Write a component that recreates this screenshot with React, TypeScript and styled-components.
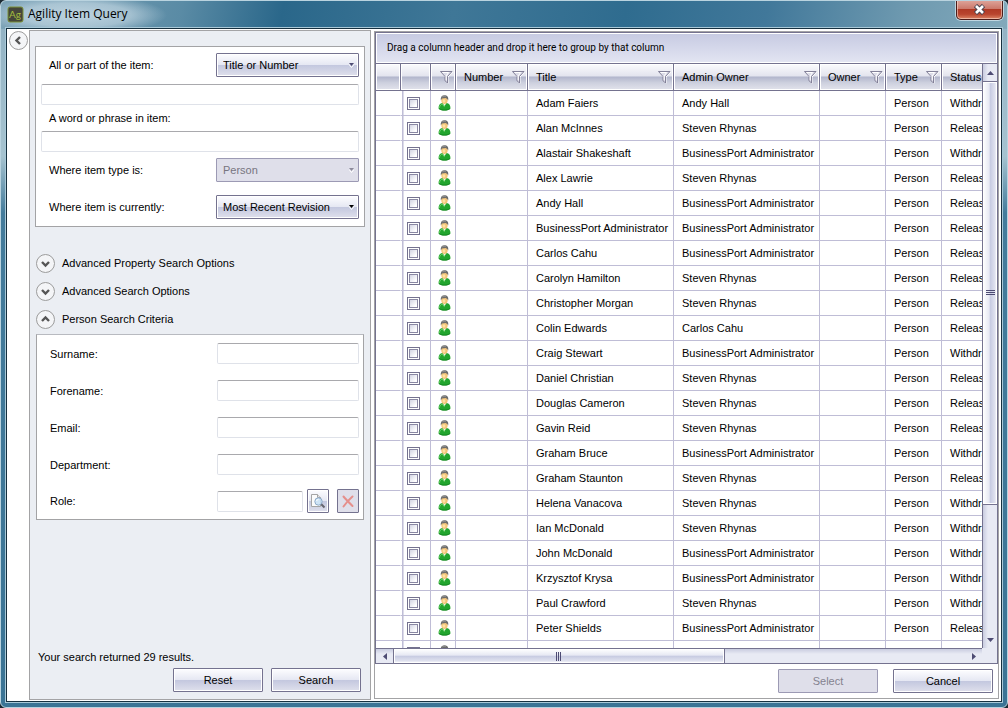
import React from "react";
import styled, { createGlobalStyle, css } from "styled-components";

const edge = "#74728f";
const rule = "#bfbdd6";

const GlobalStyle = createGlobalStyle`
  *, *::before, *::after { box-sizing: border-box; }
  html, body { margin: 0; background: #1d2a33; }
  body, button, input, select {
    font-family: "Liberation Sans", Arial, sans-serif;
    font-size: 11px;
    line-height: 14px;
    color: #000;
  }
`;

const gloss = css`
  background: linear-gradient(#fdfdff 0%, #e6e8f3 48%, #c4c8df 52%, #dfe0ec 100%);
  border: 1px solid ${edge};
  border-radius: 1px;
  box-shadow: inset 0 0 0 1px #fff;
`;

const Window = styled.div`
  display: flex;
  flex-direction: column;
  height: 100vh;
  min-height: 640px;
  padding: 0 4px 4px;
  border: 1px solid #b9d3df;
  border-radius: 6px;
  overflow: hidden;
  background:
    radial-gradient(ellipse 90px 20px at 76px 14px, rgba(214, 229, 238, 0.75), rgba(214, 229, 238, 0.55) 60%, transparent 100%) no-repeat 0 0 / 100% 28px,
    linear-gradient(100deg, #7ea4b8 0%, #5a8ba5 18%, #2a678a 28%, #3f7797 45%, #2f6c8f 62%, #41789a 76%, #6f9ab0 90%, #82a9bb 100%) no-repeat 0 0 / 100% 28px,
    linear-gradient(#8fb0c2 0%, #a6c3d0 22%, #447c9c 30%, #3b7495 100%);
`;

const TitleBar = styled.header`
  display: flex;
  align-items: center;
  flex: 0 0 26px;
  gap: 4px;
  padding-left: 2px;
  position: relative;
`;

const AppMark = styled.svg`
  width: 17px;
  height: 17px;
`;

const TitleText = styled.h1`
  margin: 0;
  font: 400 12px/18px "Open Sans", "Noto Sans", sans-serif;
`;

const CloseButton = styled.button`
  position: absolute;
  top: -1px;
  right: 0;
  display: grid;
  place-items: center;
  width: 47px;
  height: 20px;
  padding: 0;
  border: 1px solid #4b1c1a;
  border-top: 0;
  border-radius: 0 0 5px 5px;
  background: linear-gradient(#dfa79d 0%, #cc7a6c 45%, #b03a26 50%, #b9452f 75%, #dc8465 100%);
  box-shadow: inset 0 0 0 1px rgba(255, 225, 215, 0.55), 0 0 0 1px rgba(220, 235, 242, 0.7);
`;

const Client = styled.main`
  display: flex;
  flex: 1;
  min-height: 0;
  border: 1px solid #16303f;
  outline: 1px solid #a9c9d8;
  margin: 1px;
  background: #fff;
`;

const Rail = styled.div`
  flex: 0 0 22px;
  padding: 2px 0 0 2px;
`;

const RoundButton = styled.button`
  display: grid;
  place-items: center;
  flex: none;
  width: 19px;
  height: 19px;
  padding: 0;
  border: 1px solid #9c9c9c;
  border-radius: 50%;
  background: #f4f5f7;
`;

const SearchPane = styled.form`
  display: flex;
  flex-direction: column;
  flex: 0 0 342px;
  margin: 1px 3px 1px 0;
  padding: 15px 5px 7px;
  border: 1px solid #a3a3a5;
  background: #ebeef3;
`;

const QueryBox = styled.section`
  display: flex;
  flex-direction: column;
  padding: 6px 5px 7px;
  border: 1px solid #a3a3a5;
  background: #fff;
`;

const QueryRow = styled.div<{ $before?: number; $after?: number }>`
  display: flex;
  align-items: center;
  justify-content: space-between;
  margin-top: ${(p) => p.$before ?? 0}px;
  margin-bottom: ${(p) => p.$after ?? 0}px;
  padding-left: 8px;
`;

const WideLabel = styled.label`
  padding: 6px 8px;
`;

const TextBox = styled.input`
  flex: 1;
  min-width: 0;
  width: 100%;
  height: 21px;
  padding: 0 4px;
  border: 1px solid #dfe2e9;
  border-top-color: #a9a9ad;
  border-radius: 2px;
  background: #fff;
`;

const WideTextBox = styled(TextBox)`
  flex: none;
`;

const SelectFrame = styled.div`
  position: relative;
  width: 143px;
`;

const SelectBox = styled.select`
  appearance: none;
  display: block;
  width: 100%;
  height: 24px;
  padding: 0 16px 0 6px;
  ${gloss}
  &:disabled {
    background: #dfdfea;
    border-color: #9c9ab4;
    box-shadow: none;
    color: #77757f;
    opacity: 1;
  }
`;

const SelectArrow = styled.svg`
  position: absolute;
  right: 5px;
  top: 10px;
  width: 5px;
  height: 5px;
  pointer-events: none;
`;

const Expanders = styled.div`
  display: flex;
  flex-direction: column;
  margin: 22px 0 1px 1px;
`;

const Expander = styled.label`
  display: flex;
  align-items: center;
  gap: 7px;
  height: 28px;
`;

const CriteriaBox = styled.section`
  margin: 0 1px;
  padding: 0 4px 0 13px;
  border: 1px solid #a3a3a5;
  border-top-color: #b8bac0;
  background: #fff;
`;

const Field = styled.div`
  display: grid;
  grid-template-columns: 1fr 142px;
  align-items: center;
  height: 37px;
  &:last-child { height: 36px; }
`;

const FieldControls = styled.div`
  display: flex;
  align-items: center;
  gap: 8px;
`;

const Picker = styled.div`
  display: flex;
  align-items: center;
  flex: 1;
  gap: 4px;
`;

const IconButton = styled.button`
  display: grid;
  place-items: center;
  flex: none;
  width: 22px;
  height: 24px;
  padding: 0;
  ${gloss}
  &:disabled {
    background: #dfdfea;
    box-shadow: none;
  }
`;

const SearchFooter = styled.footer`
  display: flex;
  flex-direction: column;
  gap: 4px;
  margin-top: auto;
  padding: 0 4px 0 3px;
`;

const ResultNote = styled.p`
  margin: 0;
`;

const Actions = styled.div<{ $gap: number }>`
  display: flex;
  justify-content: flex-end;
  gap: ${(p) => p.$gap}px;
`;

const Button = styled.button<{ $wide?: boolean }>`
  width: ${(p) => (p.$wide ? 100 : 90)}px;
  height: 24px;
  padding: 0;
  ${gloss}
  &:disabled {
    background: #dfdfea;
    border-color: #9c9ab4;
    box-shadow: none;
    color: #84828f;
  }
`;

const ResultPane = styled.section`
  display: flex;
  flex-direction: column;
  flex: 1;
  min-width: 0;
  margin: 2px 2px 2px 0;
  border: 1px solid #a3a3a5;
`;

const ResultFooter = styled.footer`
  padding: 5px;
`;

const DataGrid = styled.div`
  display: flex;
  flex-direction: column;
  flex: 1;
  min-height: 0;
  border: 1px solid ${edge};
`;

const GroupBand = styled.div`
  display: flex;
  align-items: center;
  flex: 0 0 31px;
  padding: 0 11px;
  border-bottom: 1px solid ${edge};
  background: linear-gradient(#c6cae2, #e3e5f2);
  box-shadow: inset 0 0 0 1px #fff;
  font-family: Roboto, "Liberation Sans", sans-serif;
  font-size: 10px;
`;

const GridBody = styled.div`
  display: grid;
  grid-template-columns: minmax(0, 1fr) 15px;
  grid-template-rows: minmax(0, 1fr) 15px;
  flex: 1;
  min-height: 0;
`;

const Viewport = styled.div`
  overflow: hidden;
`;

const Table = styled.table`
  width: 100%;
  min-width: 660px;
  table-layout: fixed;
  border-collapse: separate;
  border-spacing: 0;
`;

const Col = styled.col<{ $w?: number }>`
  width: ${(p) => (p.$w ? `${p.$w}px` : "auto")};
`;

const HeadCell = styled.th`
  height: 27px;
  padding: 0 2px 0 8px;
  border-right: 1px solid ${edge};
  border-bottom: 1px solid ${edge};
  background: linear-gradient(#fbfbfd 0%, #e3e4ee 46%, #b2b6cc 50%, #cdd0de 72%, #e2e3ec 100%);
  box-shadow: inset 0 0 0 1px #fff;
  font-weight: 400;
  text-align: left;
  white-space: nowrap;
`;

const HeadContent = styled.div`
  display: flex;
  align-items: center;
  justify-content: space-between;
`;

const Cell = styled.td<{ $kind?: "lead" | "check" | "icon" }>`
  height: 25px;
  padding: 0 0 0 8px;
  border-right: 1px solid ${rule};
  border-bottom: 1px solid ${rule};
  white-space: nowrap;
  ${(p) => p.$kind === "lead" && css`border-right-color: transparent;`}
  ${(p) => p.$kind === "check" && css`
    padding-left: 6px;
    background: linear-gradient(90deg, #fff 1px, ${rule} 1px 2px, #dcdbe9 2px 3px, #fff 3px);
  `}
  ${(p) => p.$kind === "icon" && css`padding-left: 7px;`}
`;

const Tick = styled.input`
  appearance: none;
  display: block;
  width: 13px;
  height: 13px;
  margin: 0;
  border: 1px solid ${edge};
  background: linear-gradient(135deg, #d3d5e3, #fff 80%) center / 7px 7px no-repeat #fff;
  box-shadow: inset 0 0 0 1px #fff, inset 0 0 0 2px #8a88a3;
`;

const Glyph = styled.svg`
  display: block;
  flex: none;
`;

const ScrollBar = styled.div<{ $vertical?: boolean }>`
  display: flex;
  min-width: 0;
  min-height: 0;
  ${(p) => p.$vertical
    ? css`
        flex-direction: column;
        border-left: 1px solid ${edge};
        background: linear-gradient(90deg, #c9cce0, #e8eaf4 5px);
      `
    : css`
        border-top: 1px solid ${edge};
        background: linear-gradient(#c9cce0, #e8eaf4 5px);
      `}
`;

const ScrollArrow = styled.button`
  display: grid;
  place-items: center;
  flex: 0 0 17px;
  min-width: 0;
  padding: 0;
  border: 0;
  background: none;
`;

const ScrollTrack = styled.div<{ $vertical?: boolean }>`
  display: flex;
  flex: 1;
  flex-direction: ${(p) => (p.$vertical ? "column" : "row")};
  min-width: 0;
  min-height: 0;
`;

const ScrollThumb = styled.div<{ $vertical?: boolean; $share: number }>`
  display: grid;
  place-items: center;
  flex: 0 0 ${(p) => p.$share}%;
  border: 1px solid ${edge};
  ${(p) => p.$vertical
    ? css`border-width: 1px 0; background: linear-gradient(90deg, #fff, #e6e8f3 45%, #c6cae1 50%, #e0e2ef 85%, #fff);`
    : css`border-width: 0 1px; background: linear-gradient(#fff, #e6e8f3 45%, #c6cae1 50%, #e0e2ef 85%, #fff);`}
  box-shadow: inset 0 0 0 1px #fff;
`;

const Corner = styled.div`
  background: #e8eaf4;
`;

const Chevron = ({ to }: { to: "up" | "down" | "left" }) => {
  const d = { up: "M1.5 6.5 5 3l3.500 3.500", down: "M1.5 3.500l3.500 3.500 3.500-3.500", left: "M6.500 1.500 3 5l3.500 3.500" }[to];
  return (
    <Glyph width="11" height="11" viewBox="-0.500 -0.500 11 11" aria-hidden="true">
      <path d={d} fill="none" stroke="#555" strokeWidth="2.400" />
    </Glyph>
  );
};

const Funnel = () => (
  <Glyph width="13" height="13" viewBox="0 0 13 13" aria-hidden="true">
    <path d="M1 1h11.5L8 6v6.5L5.500 10.300V6z" fill="#e6e6ef" stroke="#fff" />
    <path d="M.5.5H12L7.500 5.500V12L5 9.800V5.500z" fill="#dcdce8" stroke="#77758f" strokeWidth=".9" />
    <path d="M2.500 1.500h6L6.200 5.200v4" fill="none" stroke="#fff" />
  </Glyph>
);

const Person = () => (
  <Glyph width="13" height="16" viewBox="0 0 13 16" aria-hidden="true">
    <path d="M.5 13.500C.5 10 2 8.400 4.300 8h4.400c2.300.4 3.800 2 3.800 5.500-1.200 1.400-3.400 2-6 2s-4.800-.6-6-2z" fill="#22a52e" />
    <path d="M1.500 12.800C1.700 10.600 2.700 9.500 4.300 9.200l2.200 2.600" fill="none" stroke="#6bd466" />
    <path d="M1.200 13.700c1.300 1 3.200 1.400 5.300 1.400s4-.4 5.300-1.400" fill="none" stroke="#0f7d1d" strokeWidth=".8" />
    <path d="M4.500 8.100 6.500 11l2-2.900z" fill="#f4f7e8" />
    <ellipse cx="6.500" cy="5" rx="3.200" ry="3.900" fill="#f3c478" />
    <ellipse cx="6" cy="6" rx="1.500" ry="1.700" fill="#fde3a6" />
    <path d="M2.800 5.500C2.300 2 3.800.3 6.500.3s4.300 1.600 3.700 5.200L9.300 4 7.600 2.900 4 3.600z" fill="#6c6c6c" />
    <path d="M4.200 2C5 1.200 6.500 1 7.800 1.400" fill="none" stroke="#a2a2a2" strokeWidth=".8" />
  </Glyph>
);

const Triangle = ({ to }: { to: "up" | "down" | "left" | "right" }) => {
  const points = {
    up: "0,6 3.5,2 7,6",
    down: "0,2 3.5,6 7,2",
    left: "6,0 2,3.5 6,7",
    right: "2,0 6,3.5 2,7",
  }[to];
  return (
    <Glyph width="7" height="7" viewBox="0 0 7 7" aria-hidden="true">
      <polygon points={points} fill="#4d4b73" />
    </Glyph>
  );
};

const Grip = ({ vertical }: { vertical?: boolean }) => (
  <Glyph width="9" height="9" viewBox="0 0 9 9" shapeRendering="crispEdges" aria-hidden="true">
    <path
      d={vertical ? "M0 2.500h9M0 4.500h9M0 6.500h9" : "M2.500 0v9M4.500 0v9M6.500 0v9"}
      stroke="#4d4b73"
    />
  </Glyph>
);

type DropdownProps = { id: string; value: string; disabled?: boolean; arrow?: string };

const Dropdown = ({ id, value, disabled, arrow = "#000" }: DropdownProps) => (
  <SelectFrame>
    <SelectBox id={id} disabled={disabled}>
      <option>{value}</option>
    </SelectBox>
    <SelectArrow viewBox="0 0 5 5" aria-hidden="true">
      <path d="M0 1.500 2.500 4.500 5 1.500" fill="none" stroke="#fff" />
      <polygon points="0,0 5,0 2.500,3" fill={arrow} />
    </SelectArrow>
  </SelectFrame>
);

const BPA = "BusinessPort Administrator";
const SR = "Steven Rhynas";
const people: [string, string, string][] = [
  ["Adam Faiers", "Andy Hall", "Withdrawn"],
  ["Alan McInnes", SR, "Released"],
  ["Alastair Shakeshaft", BPA, "Withdrawn"],
  ["Alex Lawrie", SR, "Released"],
  ["Andy Hall", BPA, "Released"],
  [BPA, BPA, "Released"],
  ["Carlos Cahu", BPA, "Released"],
  ["Carolyn Hamilton", SR, "Released"],
  ["Christopher Morgan", SR, "Released"],
  ["Colin Edwards", "Carlos Cahu", "Released"],
  ["Craig Stewart", BPA, "Withdrawn"],
  ["Daniel Christian", SR, "Released"],
  ["Douglas Cameron", SR, "Released"],
  ["Gavin Reid", SR, "Released"],
  ["Graham Bruce", BPA, "Withdrawn"],
  ["Graham Staunton", SR, "Released"],
  ["Helena Vanacova", SR, "Withdrawn"],
  ["Ian McDonald", SR, "Withdrawn"],
  ["John McDonald", BPA, "Withdrawn"],
  ["Krzysztof Krysa", BPA, "Withdrawn"],
  ["Paul Crawford", SR, "Withdrawn"],
  ["Peter Shields", BPA, "Released"],
  ["", "", ""],
];

const columns = ["Number", "Title", "Admin Owner", "Owner", "Type", "Status"];
const widths = [25, 30, 25, 72, 146, 146, 66, 56];

export default function App() {
  return (
    <>
      <GlobalStyle />
      <Window>
        <TitleBar>
          <AppMark viewBox="0 0 17 17" aria-hidden="true">
            <rect x="1" y="1" width="15" height="15" rx="2" fill="#45463a" stroke="#7c9136" />
            <text x="2" y="12" fontSize="10" fontFamily="Lato, sans-serif" fill="#a3bd3d">Ag</text>
          </AppMark>
          <TitleText>Agility Item Query</TitleText>
          <CloseButton type="button" aria-label="Close">
            <Glyph width="13" height="11" viewBox="0 0 13 11" aria-hidden="true">
              <path d="M2.500 1.500l8 8M10.500 1.500l-8 8" stroke="#4a4450" strokeWidth="4.600" />
              <path d="M3 2l7 7M10 2 3 9" stroke="#fff" strokeWidth="2.600" />
            </Glyph>
          </CloseButton>
        </TitleBar>
        <Client>
          <Rail>
            <RoundButton type="button" aria-label="Collapse search"><Chevron to="left" /></RoundButton>
          </Rail>
          <SearchPane onSubmit={(e) => e.preventDefault()}>
            <QueryBox>
              <QueryRow $after={7}>
                <label htmlFor="match">All or part of the item:</label>
                <Dropdown id="match" value="Title or Number" arrow="#4d4b73" />
              </QueryRow>
              <WideTextBox id="part" aria-label="Item text" />
              <WideLabel htmlFor="phrase">A word or phrase in item:</WideLabel>
              <WideTextBox id="phrase" />
              <QueryRow $before={6} $after={13}>
                <label htmlFor="type">Where item type is:</label>
                <Dropdown id="type" value="Person" disabled arrow="#8d8b9c" />
              </QueryRow>
              <QueryRow>
                <label htmlFor="revision">Where item is currently:</label>
                <Dropdown id="revision" value="Most Recent Revision" />
              </QueryRow>
            </QueryBox>
            <Expanders>
              <Expander>
                <RoundButton type="button"><Chevron to="down" /></RoundButton>
                Advanced Property Search Options
              </Expander>
              <Expander>
                <RoundButton type="button"><Chevron to="down" /></RoundButton>
                Advanced Search Options
              </Expander>
              <Expander>
                <RoundButton type="button"><Chevron to="up" /></RoundButton>
                Person Search Criteria
              </Expander>
            </Expanders>
            <CriteriaBox>
              {["Surname", "Forename", "Email", "Department"].map((name) => (
                <Field key={name}>
                  <label htmlFor={name}>{name}:</label>
                  <TextBox id={name} />
                </Field>
              ))}
              <Field>
                <label htmlFor="Role">Role:</label>
                <FieldControls>
                  <Picker>
                    <TextBox id="Role" />
                    <IconButton type="button" aria-label="Find role">
                      <Glyph width="16" height="16" viewBox="0 0 16 16" aria-hidden="true">
                        <path d="M1.500 1.500h6l3 3v9h-9z" fill="#fbfbfb" stroke="#a5a5a5" />
                        <path d="M7.500 1.500v3h3" fill="#e4e4e4" stroke="#a5a5a5" />
                        <circle cx="8.500" cy="8.500" r="3.700" fill="#c5dff5" fillOpacity=".85" stroke="#8fabc9" />
                        <path d="M6.500 8c.3-1 1-1.500 2-1.600" fill="none" stroke="#fff" />
                        <path d="M11.300 11.300 14.500 14.500" stroke="#66666f" strokeWidth="2" />
                      </Glyph>
                    </IconButton>
                  </Picker>
                  <IconButton type="button" aria-label="Clear role" disabled>
                    <Glyph width="12" height="13" viewBox="0 0 12 13" aria-hidden="true">
                      <path d="M1.500 1.500C4 4.500 7.500 8 10.500 11M10.500 1.500C7 4.500 4 8 1.500 11.500" fill="none" stroke="#e58f8b" strokeWidth="2" strokeLinecap="round" />
                    </Glyph>
                  </IconButton>
                </FieldControls>
              </Field>
            </CriteriaBox>
            <SearchFooter>
              <ResultNote>Your search returned 29 results.</ResultNote>
              <Actions $gap={8}>
                <Button type="reset">Reset</Button>
                <Button type="submit">Search</Button>
              </Actions>
            </SearchFooter>
          </SearchPane>
          <ResultPane>
            <DataGrid>
              <GroupBand>Drag a column header and drop it here to group by that column</GroupBand>
              <GridBody>
                <Viewport>
                  <Table>
                    <colgroup>
                      {widths.map((w, i) => <Col key={i} $w={w} />)}
                      <Col />
                    </colgroup>
                    <thead>
                      <tr>
                        <HeadCell />
                        <HeadCell />
                        <HeadCell><HeadContent><span /><Funnel /></HeadContent></HeadCell>
                        {columns.map((c) => (
                          <HeadCell key={c}><HeadContent>{c}<Funnel /></HeadContent></HeadCell>
                        ))}
                      </tr>
                    </thead>
                    <tbody>
                      {people.map(([title, owner, status], i) => (
                        <tr key={i}>
                          <Cell $kind="lead" />
                          <Cell $kind="check"><Tick type="checkbox" aria-label={title || "Item"} /></Cell>
                          <Cell $kind="icon"><Person /></Cell>
                          <Cell />
                          <Cell>{title}</Cell>
                          <Cell>{owner}</Cell>
                          <Cell />
                          <Cell>{title && "Person"}</Cell>
                          <Cell>{status}</Cell>
                        </tr>
                      ))}
                    </tbody>
                  </Table>
                </Viewport>
                <ScrollBar $vertical>
                  <ScrollArrow type="button" aria-label="Scroll up"><Triangle to="up" /></ScrollArrow>
                  <ScrollTrack $vertical>
                    <ScrollThumb $vertical $share={77}><Grip vertical /></ScrollThumb>
                  </ScrollTrack>
                  <ScrollArrow type="button" aria-label="Scroll down"><Triangle to="down" /></ScrollArrow>
                </ScrollBar>
                <ScrollBar>
                  <ScrollArrow type="button" aria-label="Scroll left"><Triangle to="left" /></ScrollArrow>
                  <ScrollTrack>
                    <ScrollThumb $share={58}><Grip /></ScrollThumb>
                  </ScrollTrack>
                  <ScrollArrow type="button" aria-label="Scroll right"><Triangle to="right" /></ScrollArrow>
                </ScrollBar>
                <Corner />
              </GridBody>
            </DataGrid>
            <ResultFooter>
              <Actions $gap={15}>
                <Button type="button" $wide disabled>Select</Button>
                <Button type="button" $wide>Cancel</Button>
              </Actions>
            </ResultFooter>
          </ResultPane>
        </Client>
      </Window>
    </>
  );
}
